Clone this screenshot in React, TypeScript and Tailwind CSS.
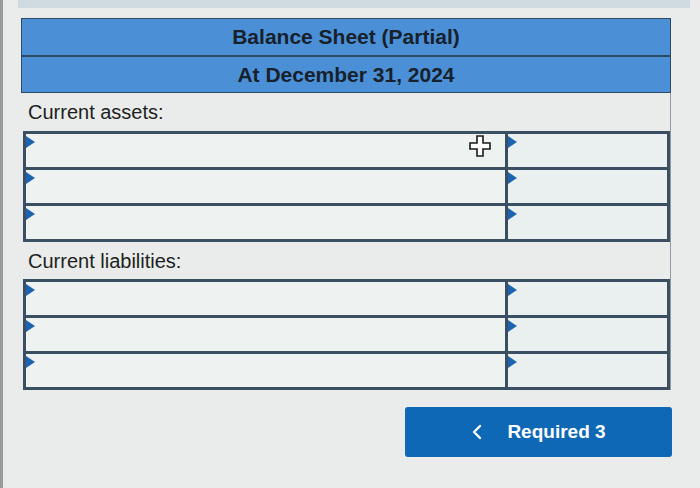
import React from 'react';

function Marker() {
  return (
    <span className="absolute left-0 top-[2px] h-0 w-0 border-y-[6px] border-l-[9px] border-y-transparent border-l-[#1c64b0]" />
  );
}

function InputRows({ rows }: { rows: number }) {
  return (
    <table className="w-[647px] border-collapse border-[3px] border-[#3b4f63]">
      <tbody>
        {Array.from({ length: rows }).map((_, i) => (
          <tr key={i} className="h-[36px]">
            <td className="relative w-[482px] border-[3px] border-[#3b4f63] bg-[#eef2f1] p-0">
              <Marker />
            </td>
            <td className="relative border-[3px] border-[#3b4f63] bg-[#eaf0ef] p-0">
              <Marker />
            </td>
          </tr>
        ))}
      </tbody>
    </table>
  );
}

export default function App() {
  return (
    <div className="relative h-[488px] w-[700px] overflow-hidden border-l-[3px] border-[#9a9c9b] bg-[#e9ecea] font-['Liberation_Sans',Arial,sans-serif] text-[#1d1f22]">
      {/* top strip of the page above */}
      <div className="ml-[15px] h-[8px] w-[672px] bg-[#cfdbe1]" />

      <div className="ml-[18px] mt-[10px] w-[650px]">
        {/* Header */}
        <div className="border border-[#2f4a63] bg-[#4b90d6] text-[#17212c]">
          <div className="flex h-[38px] items-center justify-center border-b-2 border-[#2f4a63] text-[21px] font-bold">
            Balance Sheet (Partial)
          </div>
          <div className="flex h-[35px] items-center justify-center text-[21px] font-bold">
            At December 31, 2024
          </div>
        </div>

        {/* Assets and liabilities */}
        <div className="border-r border-[#8d9ba6]">
          <div className="flex h-[38px] items-center pl-[7px] text-[20px]">Current assets:</div>
          <div className="ml-[2px]">
            <InputRows rows={3} />
          </div>
          <div className="flex h-[37px] items-center pl-[7px] text-[20px]">Current liabilities:</div>
          <div className="ml-[2px]">
            <InputRows rows={3} />
          </div>
        </div>
      </div>

      {/* Mouse cursor */}
      <svg className="absolute left-[465px] top-[134px]" width="24" height="24" viewBox="0 0 24 24">
        <path
          d="M9 2h6v7h7v6h-7v7H9v-7H2V9h7z"
          fill="#ffffff"
          stroke="#1a1a1a"
          strokeWidth="1.6"
        />
      </svg>

      {/* Button */}
      <div className="mt-[17px] flex justify-end pr-[28px]">
        <button className="flex h-[50px] w-[267px] items-center justify-center gap-[24px] rounded-[3px] bg-[#0e68b6] text-[19px] font-bold text-white">
          <svg width="12" height="18" viewBox="0 0 12 18">
            <path d="M9 3L3 9l6 6" fill="none" stroke="#ffffff" strokeWidth="2.4" strokeLinecap="round" strokeLinejoin="round" />
          </svg>
          <span>Required 3</span>
        </button>
      </div>
    </div>
  );
}
